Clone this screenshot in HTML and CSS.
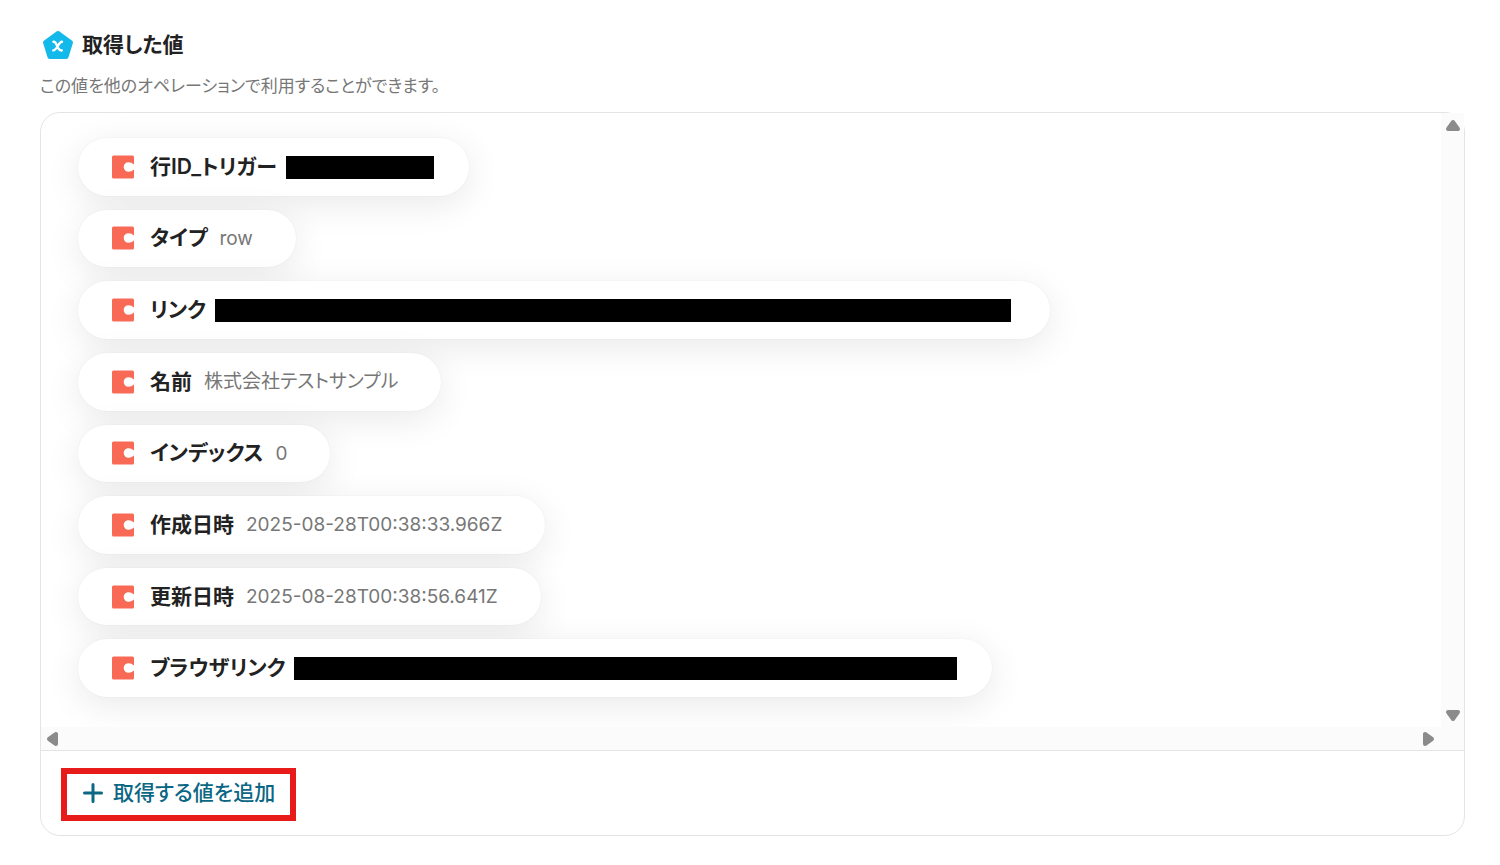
FILE: index.html
```html
<!DOCTYPE html>
<html lang="ja">
<head>
<meta charset="UTF-8">
<meta name="viewport" content="width=device-width, initial-scale=1.0">
<title>取得した値</title>
<link rel="stylesheet" href="styles.css">
</head>
<body>

<!-- shared icon for the value pills -->
<svg width="0" height="0" class="defs" aria-hidden="true">
  <symbol id="coda" viewBox="0 0 22 24">
    <path fill="#f86a55" d="M1.500 0.500H20.500Q22 0.500 22 2V9.500Q19.500 7.200 16.500 7.200A4.800 4.800 0 0 0 16.500 16.800Q19.500 16.800 22 14.500V22Q22 23.500 20.500 23.500H1.500Q0 23.500 0 22V2Q0 0.500 1.500 0.500Z"/>
  </symbol>
</svg>

<main class="output">
  <header class="output-header">
    <svg class="header-icon" viewBox="0 0 32 30" aria-hidden="true">
      <path fill="#12b9ea" stroke="#12b9ea" stroke-width="4" stroke-linejoin="round" d="M16 3L29 12.300L24.500 27H7.500L3 12.300Z"/>
      <path fill="none" stroke="#fff" stroke-width="2.400" stroke-linecap="round" d="M11.500 11.800C15.500 11 14.500 21.200 19.800 20.400M20 11.800C16.500 11.800 15 20.400 11.300 20.400"/>
    </svg>
    <h2>取得した値</h2>
  </header>
  <p class="note">この値を他のオペレーションで利用することができます。</p>

  <section class="card">
    <div class="scroll-area">
      <ul class="values">
        <li class="pill">
          <svg class="pill-icon"><use href="#coda"/></svg>
          <span class="label">行ID_トリガー</span>
          <span class="mask mask-id"></span>
        </li>
        <li class="pill">
          <svg class="pill-icon"><use href="#coda"/></svg>
          <span class="label">タイプ</span>
          <span class="value">row</span>
        </li>
        <li class="pill">
          <svg class="pill-icon"><use href="#coda"/></svg>
          <span class="label">リンク</span>
          <span class="mask mask-link"></span>
        </li>
        <li class="pill">
          <svg class="pill-icon"><use href="#coda"/></svg>
          <span class="label">名前</span>
          <span class="value">株式会社テストサンプル</span>
        </li>
        <li class="pill">
          <svg class="pill-icon"><use href="#coda"/></svg>
          <span class="label">インデックス</span>
          <span class="value">0</span>
        </li>
        <li class="pill">
          <svg class="pill-icon"><use href="#coda"/></svg>
          <span class="label">作成日時</span>
          <span class="value">2025-08-28T00:38:33.966Z</span>
        </li>
        <li class="pill">
          <svg class="pill-icon"><use href="#coda"/></svg>
          <span class="label">更新日時</span>
          <span class="value">2025-08-28T00:38:56.641Z</span>
        </li>
        <li class="pill">
          <svg class="pill-icon"><use href="#coda"/></svg>
          <span class="label">ブラウザリンク</span>
          <span class="mask mask-browser"></span>
        </li>
      </ul>
      <div class="bar bar-y">
        <button type="button" aria-label="上へ"><svg viewBox="0 0 16 12"><path d="M8 3L13 10H3Z"/></svg></button>
        <button type="button" aria-label="下へ"><svg viewBox="0 0 16 12"><path d="M8 9L13 2H3Z"/></svg></button>
      </div>
      <div class="bar bar-x">
        <button type="button" aria-label="左へ"><svg viewBox="0 0 12 16"><path d="M3 8L10 3V13Z"/></svg></button>
        <button type="button" aria-label="右へ"><svg viewBox="0 0 12 16"><path d="M9 8L2 3V13Z"/></svg></button>
      </div>
      <div class="corner"></div>
    </div>
    <footer class="card-footer">
      <button type="button" class="add">
        <svg viewBox="0 0 20 20" aria-hidden="true"><path d="M10 1.500V18.500M1.500 10H18.500"/></svg>
        取得する値を追加
      </button>
    </footer>
  </section>
</main>

</body>
</html>
```
FILE: styles.css
```css
* {
  box-sizing: border-box;
}
body {
  margin: 0;
  padding: 28px 35px 29px 40px;
  background-color: #fff;
  color: #222;
  font-family: Inter, "Noto Sans CJK JP", sans-serif;
  font-feature-settings: "palt";
}
button {
  padding: 0;
  border: none;
  background: none;
  font: inherit;
  font-feature-settings: inherit;
  cursor: pointer;
}
.defs {
  position: absolute;
}
.output-header {
  display: flex;
  align-items: center;
  gap: 8px;
  height: 34px;
  padding-left: 2px;
}
.header-icon {
  width: 32px;
  height: 30px;
}
h2 {
  margin: 0;
  font-size: 21px;
  line-height: 32px;
  font-weight: 600;
}
.note {
  margin: 12px 0 14px;
  color: #777;
  font-size: 17px;
  line-height: 24px;
}
.card {
  border: 1px solid #e4e4e4;
  border-radius: 20px;
}
.scroll-area {
  display: grid;
  grid-template-columns: 1fr 23px;
  grid-template-rows: 1fr 23px;
  border-bottom: 1px solid #e4e4e4;
}
.values {
  display: grid;
  grid-auto-rows: 1fr;
  justify-items: start;
  gap: 14px;
  min-height: 614px;
  margin: 0;
  padding: 25px 37px 30px;
  border-top-left-radius: 19px;
  list-style: none;
  overflow: hidden;
}
.pill {
  display: flex;
  align-items: center;
  gap: 12px;
  padding: 0 43px 0 34px;
  border-radius: 29px;
  background-color: #fff;
  box-shadow: 0 8px 36px rgba(0, 0, 0, 0.09), 0 0 2px rgba(0, 0, 0, 0.06);
  white-space: nowrap;
}
.pill-icon {
  width: 22px;
  height: 24px;
  margin-right: 4px;
}
.label {
  font-size: 21px;
  line-height: 32px;
  font-weight: 600;
}
.value {
  padding-top: 1px;
  color: #777;
  font-size: 19px;
  line-height: 28px;
}
.mask {
  height: 23px;
  margin: 1px -8px 0 -3px;
  background-color: #000;
}
.mask-id {
  width: 148px;
}
.mask-link {
  width: 796px;
  margin-right: -4px;
}
.mask-browser {
  width: 663px;
}
.bar {
  display: flex;
  justify-content: space-between;
  align-items: center;
  background-color: #fbfbfb;
}
.bar-y {
  flex-direction: column;
  padding: 6px 0 5px;
}
.bar-x {
  padding: 0 6px 0 5px;
}
.bar button {
  display: flex;
}
.bar svg {
  fill: #8b8b8b;
  stroke: #8b8b8b;
  stroke-width: 4;
  stroke-linejoin: round;
}
.bar-y svg {
  width: 16px;
  height: 12px;
}
.bar-x svg {
  width: 12px;
  height: 16px;
}
.corner {
  background-color: #fbfbfb;
}
.card-footer {
  padding: 17px 20px 14px;
}
.add {
  display: flex;
  align-items: center;
  gap: 10px;
  height: 53px;
  padding: 0 15px 4px 16px;
  border: 6px solid #e81b1b;
  color: #0b6783;
  font-size: 21px;
  line-height: 32px;
  font-weight: 500;
}
.add svg {
  width: 20px;
  height: 20px;
  fill: none;
  stroke: #0b6783;
  stroke-width: 3;
  stroke-linecap: round;
}
```
